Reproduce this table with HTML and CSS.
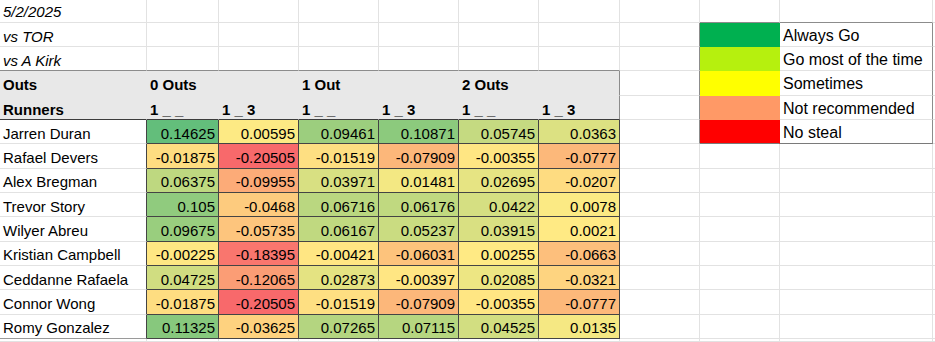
FILE: index.html
```html
<!DOCTYPE html>
<html lang="en">
<head>
<meta charset="utf-8">
<title>Steal chart</title>
<link rel="stylesheet" href="styles.css">
</head>
<body>
<div class="sheet">
  <div class="row row-first">
    <div class="c it">5/2/2025</div><div class="c"></div><div class="c"></div><div class="c"></div><div class="c"></div><div class="c"></div><div class="c"></div><div class="c"></div><div class="c lg-t"></div><div class="c lg-t"></div><div class="c"></div>
  </div>
  <div class="row">
    <div class="c it">vs TOR</div><div class="c"></div><div class="c"></div><div class="c"></div><div class="c"></div><div class="c"></div><div class="c"></div><div class="c lg-l"></div><div class="c sw sw-1"></div><div class="c lg-txt">Always Go</div><div class="c"></div>
  </div>
  <div class="row">
    <div class="c it hd-top">vs A Kirk</div><div class="c hd-top"></div><div class="c hd-top"></div><div class="c hd-top"></div><div class="c hd-top"></div><div class="c hd-top"></div><div class="c hd-top"></div><div class="c lg-l"></div><div class="c sw sw-2"></div><div class="c lg-txt">Go most of the time</div><div class="c"></div>
  </div>
  <div class="row">
    <div class="c hd">Outs</div><div class="c hd">0 Outs</div><div class="c hd"></div><div class="c hd">1 Out</div><div class="c hd"></div><div class="c hd">2 Outs</div><div class="c hd hd-end"></div><div class="c lg-l"></div><div class="c sw sw-3"></div><div class="c lg-txt">Sometimes</div><div class="c"></div>
  </div>
  <div class="row">
    <div class="c hd hd-bot">Runners</div><div class="c hd hd-bot">1 _ _</div><div class="c hd hd-bot">1 _ 3</div><div class="c hd hd-bot">1 _ _</div><div class="c hd hd-bot">1 _ 3</div><div class="c hd hd-bot">1 _ _</div><div class="c hd hd-bot hd-end">1 _ 3</div><div class="c lg-l"></div><div class="c sw sw-4"></div><div class="c lg-txt">Not recommended</div><div class="c"></div>
  </div>
  <div class="row">
    <div class="c nm">Jarren Duran</div><div class="c v">0.14625</div><div class="c v">0.00595</div><div class="c v">0.09461</div><div class="c v">0.10871</div><div class="c v">0.05745</div><div class="c v">0.0363</div><div class="c lg-l"></div><div class="c sw sw-5 lg-b"></div><div class="c lg-txt lg-b">No steal</div><div class="c"></div>
  </div>
  <div class="row">
    <div class="c nm">Rafael Devers</div><div class="c v">-0.01875</div><div class="c v">-0.20505</div><div class="c v">-0.01519</div><div class="c v">-0.07909</div><div class="c v">-0.00355</div><div class="c v">-0.0777</div><div class="c"></div><div class="c"></div><div class="c"></div><div class="c"></div>
  </div>
  <div class="row">
    <div class="c nm">Alex Bregman</div><div class="c v">0.06375</div><div class="c v">-0.09955</div><div class="c v">0.03971</div><div class="c v">0.01481</div><div class="c v">0.02695</div><div class="c v">-0.0207</div><div class="c"></div><div class="c"></div><div class="c"></div><div class="c"></div>
  </div>
  <div class="row">
    <div class="c nm">Trevor Story</div><div class="c v">0.105</div><div class="c v">-0.0468</div><div class="c v">0.06716</div><div class="c v">0.06176</div><div class="c v">0.0422</div><div class="c v">0.0078</div><div class="c"></div><div class="c"></div><div class="c"></div><div class="c"></div>
  </div>
  <div class="row">
    <div class="c nm">Wilyer Abreu</div><div class="c v">0.09675</div><div class="c v">-0.05735</div><div class="c v">0.06167</div><div class="c v">0.05237</div><div class="c v">0.03915</div><div class="c v">0.0021</div><div class="c"></div><div class="c"></div><div class="c"></div><div class="c"></div>
  </div>
  <div class="row">
    <div class="c nm">Kristian Campbell</div><div class="c v">-0.00225</div><div class="c v">-0.18395</div><div class="c v">-0.00421</div><div class="c v">-0.06031</div><div class="c v">0.00255</div><div class="c v">-0.0663</div><div class="c"></div><div class="c"></div><div class="c"></div><div class="c"></div>
  </div>
  <div class="row">
    <div class="c nm">Ceddanne Rafaela</div><div class="c v">0.04725</div><div class="c v">-0.12065</div><div class="c v">0.02873</div><div class="c v">-0.00397</div><div class="c v">0.02085</div><div class="c v">-0.0321</div><div class="c"></div><div class="c"></div><div class="c"></div><div class="c"></div>
  </div>
  <div class="row">
    <div class="c nm">Connor Wong</div><div class="c v">-0.01875</div><div class="c v">-0.20505</div><div class="c v">-0.01519</div><div class="c v">-0.07909</div><div class="c v">-0.00355</div><div class="c v">-0.0777</div><div class="c"></div><div class="c"></div><div class="c"></div><div class="c"></div>
  </div>
  <div class="row">
    <div class="c nm nm-last">Romy Gonzalez</div><div class="c v">0.11325</div><div class="c v">-0.03625</div><div class="c v">0.07265</div><div class="c v">0.07115</div><div class="c v">0.04525</div><div class="c v">0.0135</div><div class="c"></div><div class="c"></div><div class="c"></div><div class="c"></div>
  </div>
  <div class="row row-last">
    <div class="c"></div><div class="c"></div><div class="c"></div><div class="c"></div><div class="c"></div><div class="c"></div><div class="c"></div><div class="c"></div><div class="c"></div><div class="c"></div><div class="c"></div>
  </div>
</div>
<script src="script.js"></script>
</body>
</html>
```

FILE: styles.css
```css
* { box-sizing: border-box; }
html, body { margin: 0; padding: 0; background: #fff; }
body {
  font-family: "Liberation Sans", Arial, sans-serif;
  font-size: 15px;
  color: #000;
  width: 935px;
  height: 342px;
  overflow: hidden;
}
.sheet { display: flex; flex-direction: column; height: 342px; overflow: hidden; }
.row {
  display: grid;
  grid-template-columns: 147px 72px 80px 80px 80px 80px 81px 80px 80px 153px 1fr;
  height: 24.33px;
  flex: none;
}
.row-first { height: 22.7px; }
.row-last { height: 3px; }
.c {
  border-right: 1px solid #e2e2e2;
  border-bottom: 1px solid #e2e2e2;
  padding: 0 3px 1.5px;
  display: flex;
  align-items: flex-end;
  line-height: 17px;
  white-space: nowrap;
  min-width: 0;
  overflow: hidden;
}
.it { font-style: italic; }
.hd-top { border-bottom-color: #8c8c8c; }
.hd {
  background: #e8e8e8;
  font-weight: bold;
  border-right-color: #e8e8e8;
  border-bottom-color: #e8e8e8;
}
.hd-end { border-right-color: #8c8c8c; }
.hd-bot { border-bottom-color: #3c3c3c; }
.nm { border-right-color: #444; }
.nm-last { border-bottom-color: #9a9a9a; }
.v {
  justify-content: flex-end;
  border-right-color: #444;
  border-bottom-color: #444;
}
.lg-t { border-bottom-color: #8c8c8c; }
.lg-l { border-right-color: #8c8c8c; }
.lg-txt {
  font-size: 16px;
  line-height: 18px;
  border-right-color: #8c8c8c;
}
.sw-1 { background: #00b050; border-color: #00b050; }
.sw-2 { background: #b6f00e; border-color: #b6f00e; }
.sw-3 { background: #ffff00; border-color: #ffff00; }
.sw-4 { background: #ff9966; border-color: #ff9966; }
.sw-5 { background: #ff0000; border-color: #ff0000; }
.lg-b { border-bottom-color: #7a7a7a; }
```

FILE: script.js
```js
(function () {
  var cells = Array.prototype.slice.call(document.querySelectorAll('.v'));
  var vals = cells.map(function (c) { return parseFloat(c.textContent); });
  var sorted = vals.slice().sort(function (a, b) { return a - b; });
  var n = sorted.length;
  var min = sorted[0], max = sorted[n - 1];
  var pos = (n - 1) * 0.5, lo = Math.floor(pos), hi = Math.ceil(pos);
  var mid = sorted[lo] + (sorted[hi] - sorted[lo]) * (pos - lo);
  var green = [99, 190, 123], yellow = [255, 235, 132], red = [248, 105, 107];
  function mix(a, b, t) {
    return a.map(function (x, i) { return Math.round(x + (b[i] - x) * t); });
  }
  cells.forEach(function (c, i) {
    var v = vals[i], col;
    if (v >= mid) col = mix(yellow, green, (v - mid) / (max - mid));
    else col = mix(yellow, red, (mid - v) / (mid - min));
    c.style.backgroundColor = 'rgb(' + col.join(',') + ')';
  });
})();
```
